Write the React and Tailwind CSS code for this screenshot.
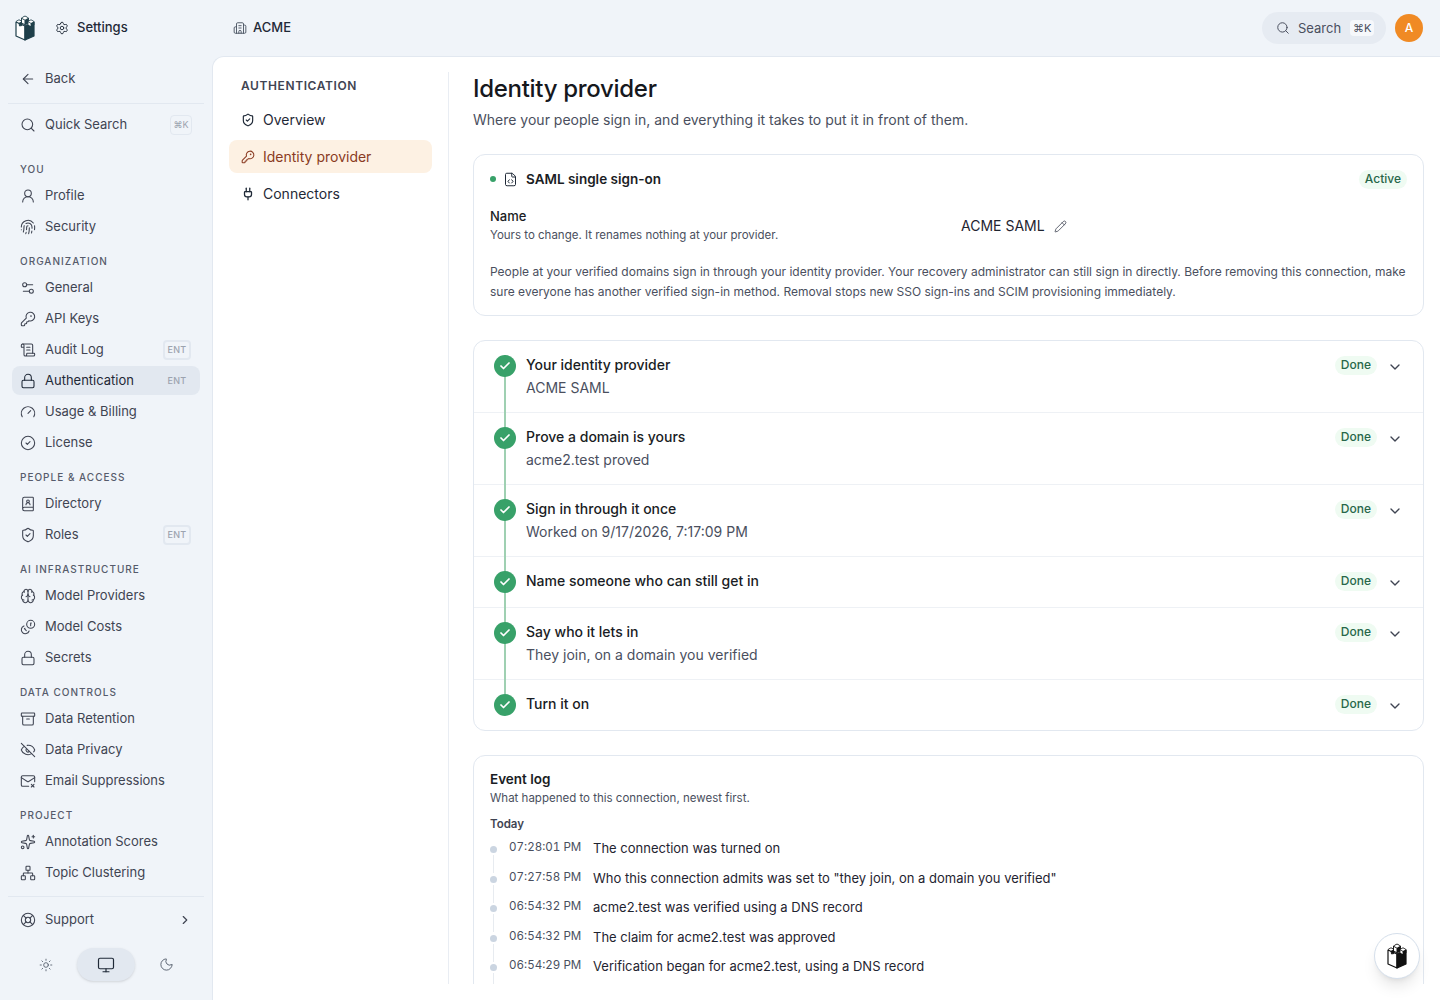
import React from "react";
import {
  ArrowLeft, Search, UserRound, Fingerprint, Settings2, KeyRound, ScrollText, Lock, Gauge, CircleCheck,
  BookUser, ShieldCheck, Brain, Coins, Archive, EyeOff, MailX, Sparkles, Network, LifeBuoy, ChevronRight,
  ChevronDown, Sun, Monitor, Moon, Settings, Building2, Plug, FileCode, Pencil, Check,
} from "lucide-react";

const sections = [
  { label: "YOU", items: [{ name: "Profile", icon: UserRound }, { name: "Security", icon: Fingerprint }] },
  {
    label: "ORGANIZATION",
    items: [
      { name: "General", icon: Settings2 },
      { name: "API Keys", icon: KeyRound },
      { name: "Audit Log", icon: ScrollText, ent: true },
      { name: "Authentication", icon: Lock, ent: true, active: true },
      { name: "Usage & Billing", icon: Gauge },
      { name: "License", icon: CircleCheck },
    ],
  },
  {
    label: "PEOPLE & ACCESS",
    items: [{ name: "Directory", icon: BookUser }, { name: "Roles", icon: ShieldCheck, ent: true }],
  },
  {
    label: "AI INFRASTRUCTURE",
    items: [{ name: "Model Providers", icon: Brain }, { name: "Model Costs", icon: Coins, flip: true }, { name: "Secrets", icon: Lock }],
  },
  {
    label: "DATA CONTROLS",
    items: [{ name: "Data Retention", icon: Archive }, { name: "Data Privacy", icon: EyeOff }, { name: "Email Suppressions", icon: MailX }],
  },
  {
    label: "PROJECT",
    items: [{ name: "Annotation Scores", icon: Sparkles }, { name: "Topic Clustering", icon: Network }],
  },
];

const steps = [
  { title: "Your identity provider", sub: "ACME SAML" },
  { title: "Prove a domain is yours", sub: "acme2.test proved" },
  { title: "Sign in through it once", sub: "Worked on 9/17/2026, 7:17:09 PM" },
  { title: "Name someone who can still get in" },
  { title: "Say who it lets in", sub: "They join, on a domain you verified" },
  { title: "Turn it on" },
];

const events = [
  { time: "07:28:01 PM", text: "The connection was turned on" },
  { time: "07:27:58 PM", text: 'Who this connection admits was set to "they join, on a domain you verified"' },
  { time: "06:54:32 PM", text: "acme2.test was verified using a DNS record" },
  { time: "06:54:32 PM", text: "The claim for acme2.test was approved" },
  { time: "06:54:29 PM", text: "Verification began for acme2.test, using a DNS record" },
];

// castle tower mark
const Logo = ({ color, className }) => (
  <svg viewBox="0 0 20 26" className={className}>
    <path d="M1 7 L10 11 L10 25 L1 21 Z" fill="#fff" stroke={color} strokeWidth="1.2" strokeLinejoin="round" />
    <path d="M10 11 L19 7 L19 21 L10 25 Z" fill={color} stroke={color} strokeWidth="1.2" strokeLinejoin="round" />
    <path d="M1 6.5 L4 4.8 L7 6.3 L7 10.5 L4.5 11 L4 8 L1 6.5 Z" fill={color} stroke={color} strokeWidth="0.8" strokeLinejoin="round" />
    <path d="M1.4 6.5 L4 5.2 L6.6 6.4 L4 7.8 Z" fill="#fff" />
    <path d="M6.5 3 L10 1 L13.5 3 L13.5 8 L10 10 L6.5 8 Z" fill={color} stroke={color} strokeWidth="0.9" strokeLinejoin="round" />
    <path d="M7 3 L10 1.4 L13 3 L10 4.8 Z" fill="#fff" />
    <path d="M7 3.9 L9.5 5.3 L9.5 9 L7 7.7 Z" fill="#fff" />
    <path d="M13 6.5 L16 4.8 L19 6.5 L19 10 L16 11.5 L13 10 Z" fill={color} stroke={color} strokeWidth="0.8" strokeLinejoin="round" />
    <path d="M13.4 6.5 L16 5.2 L18.6 6.5 L16 7.9 Z" fill="#fff" />
    <path d="M13.4 7.3 L15.6 8.5 L15.6 11 L13.4 9.8 Z" fill="#fff" />
  </svg>
);

const SideRow = ({ item }) => {
  const Icon = item.icon;
  return (
    <div className={`flex h-[29px] items-center rounded-lg pl-2 pr-[9px] ${item.active ? "bg-[#e2e8f0] text-[#1f2937]" : "text-[#3f4452]"}`}>
      <Icon size={16} strokeWidth={1.6} className={`shrink-0 ${item.flip ? "-scale-x-100" : ""}`} />
      <span className="ml-[9px] flex-1 text-[13px]">{item.name}</span>
      {item.ent && (
        <span className={`flex h-[20px] w-[28px] items-center justify-center rounded text-[9px] font-medium tracking-wide text-[#9ca3af] ${item.active ? "" : "border-2 border-[#e2e8f0]"}`}>
          ENT
        </span>
      )}
    </div>
  );
};

const Sidebar = () => (
  <aside className="flex w-[212px] shrink-0 flex-col px-[12px]">
    <div className="mt-[8px] flex h-[29px] items-center pl-2 text-[13px] text-[#3f4452]">
      <ArrowLeft size={16} strokeWidth={1.6} />
      <span className="ml-[9px]">Back</span>
    </div>
    <div className="mx-[-4px] mt-[10px] h-px bg-[#e2e8f0]" />
    <div className="mt-[6px] flex h-[29px] items-center pl-2 pr-2 text-[13px] text-[#3f4452]">
      <Search size={16} strokeWidth={1.6} />
      <span className="ml-[9px] flex-1">Quick Search</span>
      <span className="flex h-[20px] w-[22px] items-center justify-center rounded border border-[#e2e8f0] text-[9px] text-[#9ca3af]">⌘K</span>
    </div>
    <div className="mt-[10px] flex flex-col">
      {sections.map((s) => (
        <div key={s.label}>
          <div className="mb-[4px] mt-[12px] h-[16px] pl-2 text-[10px] font-medium leading-[16px] tracking-[0.1em] text-[#565b6b]">{s.label}</div>
          <div className="flex flex-col gap-[2px]">
            {s.items.map((item) => (
              <SideRow key={item.name} item={item} />
            ))}
          </div>
        </div>
      ))}
    </div>
    <div className="mx-[-4px] mt-[9px] h-px bg-[#e2e8f0]" />
    <div className="mt-[8px] flex h-[29px] items-center pl-2 pr-2 text-[13px] text-[#3f4452]">
      <LifeBuoy size={16} strokeWidth={1.6} />
      <span className="ml-[9px] flex-1">Support</span>
      <ChevronRight size={14} />
    </div>
    <div className="mt-[14px] flex items-center px-[4px]">
      <div className="flex h-[33px] w-[60px] items-center justify-center text-[#4b5563]">
        <Sun size={14} strokeWidth={1.4} />
      </div>
      <div className="flex w-[60px] justify-center">
        <div className="flex h-[33px] w-[58px] items-center justify-center rounded-full bg-[#e2e8f0] text-[#1f2937] shadow-sm">
          <Monitor size={18} strokeWidth={1.6} />
        </div>
      </div>
      <div className="flex h-[33px] w-[60px] items-center justify-center text-[#4b5563]">
        <Moon size={15} strokeWidth={1.4} />
      </div>
    </div>
  </aside>
);

const SubNav = () => (
  <div className="w-[236px] shrink-0 border-r border-[#e9edf3] pl-[16px] pr-[16px]">
    <div className="h-[28px] pl-[12px] text-xs font-semibold leading-[28px] tracking-[0.05em] text-[#3f4452]">AUTHENTICATION</div>
    <div className="mt-[3px] flex flex-col gap-[4px] text-sm">
      <div className="flex h-[33px] items-center rounded-lg pl-[12px] text-[#1f2937]">
        <ShieldCheck size={14} strokeWidth={2} />
        <span className="ml-[8px]">Overview</span>
      </div>
      <div className="flex h-[33px] items-center rounded-lg bg-[#fdf1e3] pl-[12px] text-[#8a3b22]">
        <KeyRound size={14} strokeWidth={1.8} />
        <span className="ml-[8px]">Identity provider</span>
      </div>
      <div className="flex h-[33px] items-center rounded-lg pl-[12px] text-[#1f2937]">
        <Plug size={14} strokeWidth={2.2} />
        <span className="ml-[8px]">Connectors</span>
      </div>
    </div>
  </div>
);

const Badge = ({ children }) => (
  <span className="flex h-[19px] items-center rounded-full bg-[#effbf2] px-[6px] text-xs font-medium text-[#276749]">{children}</span>
);

const StepRow = ({ step, index, last }) => (
  <div className={`relative flex items-start pl-[52px] pr-[20px] ${step.sub ? "h-[72px]" : last ? "h-[50px]" : "h-[51px]"} ${last ? "" : "border-b border-[#eef1f5]"}`}>
    {!last && <div className="absolute bottom-[-1px] left-[30px] top-[14px] w-[2px] bg-[#9fd0b2]" />}
    {index > 0 && <div className="absolute left-[30px] top-0 h-[14px] w-[2px] bg-[#9fd0b2]" />}
    <div className="absolute left-[20px] top-[14px] flex h-[22px] w-[22px] items-center justify-center rounded-full bg-[#38a169] text-white">
      <Check size={12} strokeWidth={3.5} />
    </div>
    <div className="flex-1 pt-[14px]">
      <div className="text-sm font-medium leading-[20px] text-[#1a1d24]">{step.title}</div>
      {step.sub && <div className="mt-[3px] text-sm leading-[20px] text-[#4a4f5e]">{step.sub}</div>}
    </div>
    <div className="mt-[14px] flex items-center">
      <Badge>Done</Badge>
      <ChevronDown size={16} className="ml-[10px] mt-[4px] text-[#3f4452]" />
    </div>
  </div>
);

const EventRow = ({ event }) => (
  <div className="relative flex h-[29.5px] items-start pl-[19px] leading-[20px]">
    <div className="absolute left-0 top-[8px] h-[7px] w-[7px] rounded-full bg-[#cbd5e1]" />
    <div className="absolute left-[3px] top-[17px] h-[18px] w-px bg-[#e7ebf0]" />
    <span className="mt-[1px] w-[84px] shrink-0 text-[11.6px] leading-[16px] tabular-nums text-[#4a4f5e]">{event.time}</span>
    <span className="text-[13px] text-[#1f2430]">{event.text}</span>
  </div>
);

export default function App() {
  return (
    <div className="relative flex h-[1000px] w-[1440px] flex-col overflow-hidden bg-[#f0f4f9] [font-family:Inter,sans-serif]">
      <header className="flex h-[56px] shrink-0 items-center">
        <div className="flex w-[225px] items-center pl-[15px]">
          <Logo color="#1f3f4a" className="h-[26px] w-[20px]" />
          <Settings size={14} strokeWidth={1.6} className="ml-[20px] text-[#1f2937]" />
          <span className="ml-[8px] text-[13px] font-medium text-[#1f2937]">Settings</span>
        </div>
        <div className="ml-[8px] flex items-center">
          <Building2 size={14} strokeWidth={1.6} className="text-[#4b5563]" />
          <span className="ml-[6px] text-[13px] font-medium text-[#1f2937]">ACME</span>
        </div>
        <div className="ml-auto flex items-center pr-[17px]">
          <div className="flex h-[32px] w-[124px] items-center rounded-full bg-[#e6ebf2] pl-[14px] text-[13px] text-[#4a4f5e]">
            <Search size={14} strokeWidth={1.7} />
            <span className="ml-[8px] mt-[2px]">Search</span>
            <span className="ml-[9px] flex h-[16px] w-[24px] items-center justify-center rounded bg-[#f6f8fb] text-[11px]">⌘K</span>
          </div>
          <div className="ml-[9px] flex h-[28px] w-[28px] items-center justify-center rounded-full bg-[#f08a24] text-xs font-medium text-white">A</div>
        </div>
      </header>

      <div className="flex min-h-0 flex-1">
        <Sidebar />
        <main className="flex min-w-0 flex-1 rounded-tl-xl border-l border-t border-[#e2e8f0] bg-white pb-[16px] pt-[15px]">
          <SubNav />
          <div className="min-w-0 flex-1 overflow-hidden pl-[24px] pr-[16px] pt-[1px]">
            <h1 className="text-2xl font-medium leading-[32px] tracking-[-0.0125em] text-[#16181d]">Identity provider</h1>
            <p className="mt-[5px] text-sm leading-[20px] text-[#4a4f5e]">Where your people sign in, and everything it takes to put it in front of them.</p>

            <section className="mt-[24px] h-[162px] rounded-xl border border-[#e2e8f0] px-[16px] pt-[14px]">
              <div className="flex h-[20px] items-center">
                <span className="h-[6px] w-[6px] rounded-full bg-[#38a169]" />
                <FileCode size={15} strokeWidth={1.6} className="ml-[7px] text-[#1f2937]" />
                <span className="ml-[8px] text-[13.5px] font-semibold text-[#1a1d24]">SAML single sign-on</span>
                <span className="ml-auto"><Badge>Active</Badge></span>
              </div>
              <div className="mt-[17px] flex items-center">
                <div className="w-[471px]">
                  <div className="text-[13px] font-medium leading-[20px] text-[#1a1d24]">Name</div>
                  <div className="text-[11.5px] leading-[18px] text-[#4a4f5e]">Yours to change. It renames nothing at your provider.</div>
                </div>
                <span className="mt-[2px] text-sm text-[#1f2430]">ACME SAML</span>
                <Pencil size={13} strokeWidth={1.5} className="ml-[9px] mt-[2px] text-[#3f4452]" />
              </div>
              <p className="mt-[18px] text-xs leading-[20px] text-[#4a4f5e]">
                People at your verified domains sign in through your identity provider. Your recovery administrator can still sign in directly. Before removing this connection, make sure everyone has another verified sign-in method. Removal stops new SSO sign-ins and SCIM provisioning immediately.
              </p>
            </section>

            <section className="mt-[24px] overflow-hidden rounded-xl border border-[#e2e8f0]">
              {steps.map((step, i) => (
                <StepRow key={step.title} step={step} index={i} last={i === steps.length - 1} />
              ))}
            </section>

            <section className="mt-[24px] rounded-xl border border-[#e2e8f0] px-[16px] pb-[16px] pt-[13px]">
              <div className="text-[13.5px] font-semibold leading-[20px] text-[#1a1d24]">Event log</div>
              <div className="text-[11.5px] leading-[18px] text-[#4a4f5e]">What happened to this connection, newest first.</div>
              <div className="mt-[8px] text-[11.5px] font-semibold leading-[18px] text-[#3f4452]">Today</div>
              <div className="mt-[5px]">
                {events.map((e, i) => (
                  <EventRow key={i} event={e} />
                ))}
              </div>
            </section>
          </div>
        </main>
      </div>

      <div className="absolute left-[1374px] top-[933px] flex h-[46px] w-[46px] items-center justify-center rounded-full border border-[#d5dfeb] bg-white shadow-lg">
        <Logo color="#111" className="h-[26px] w-[20px]" />
      </div>
    </div>
  );
}
